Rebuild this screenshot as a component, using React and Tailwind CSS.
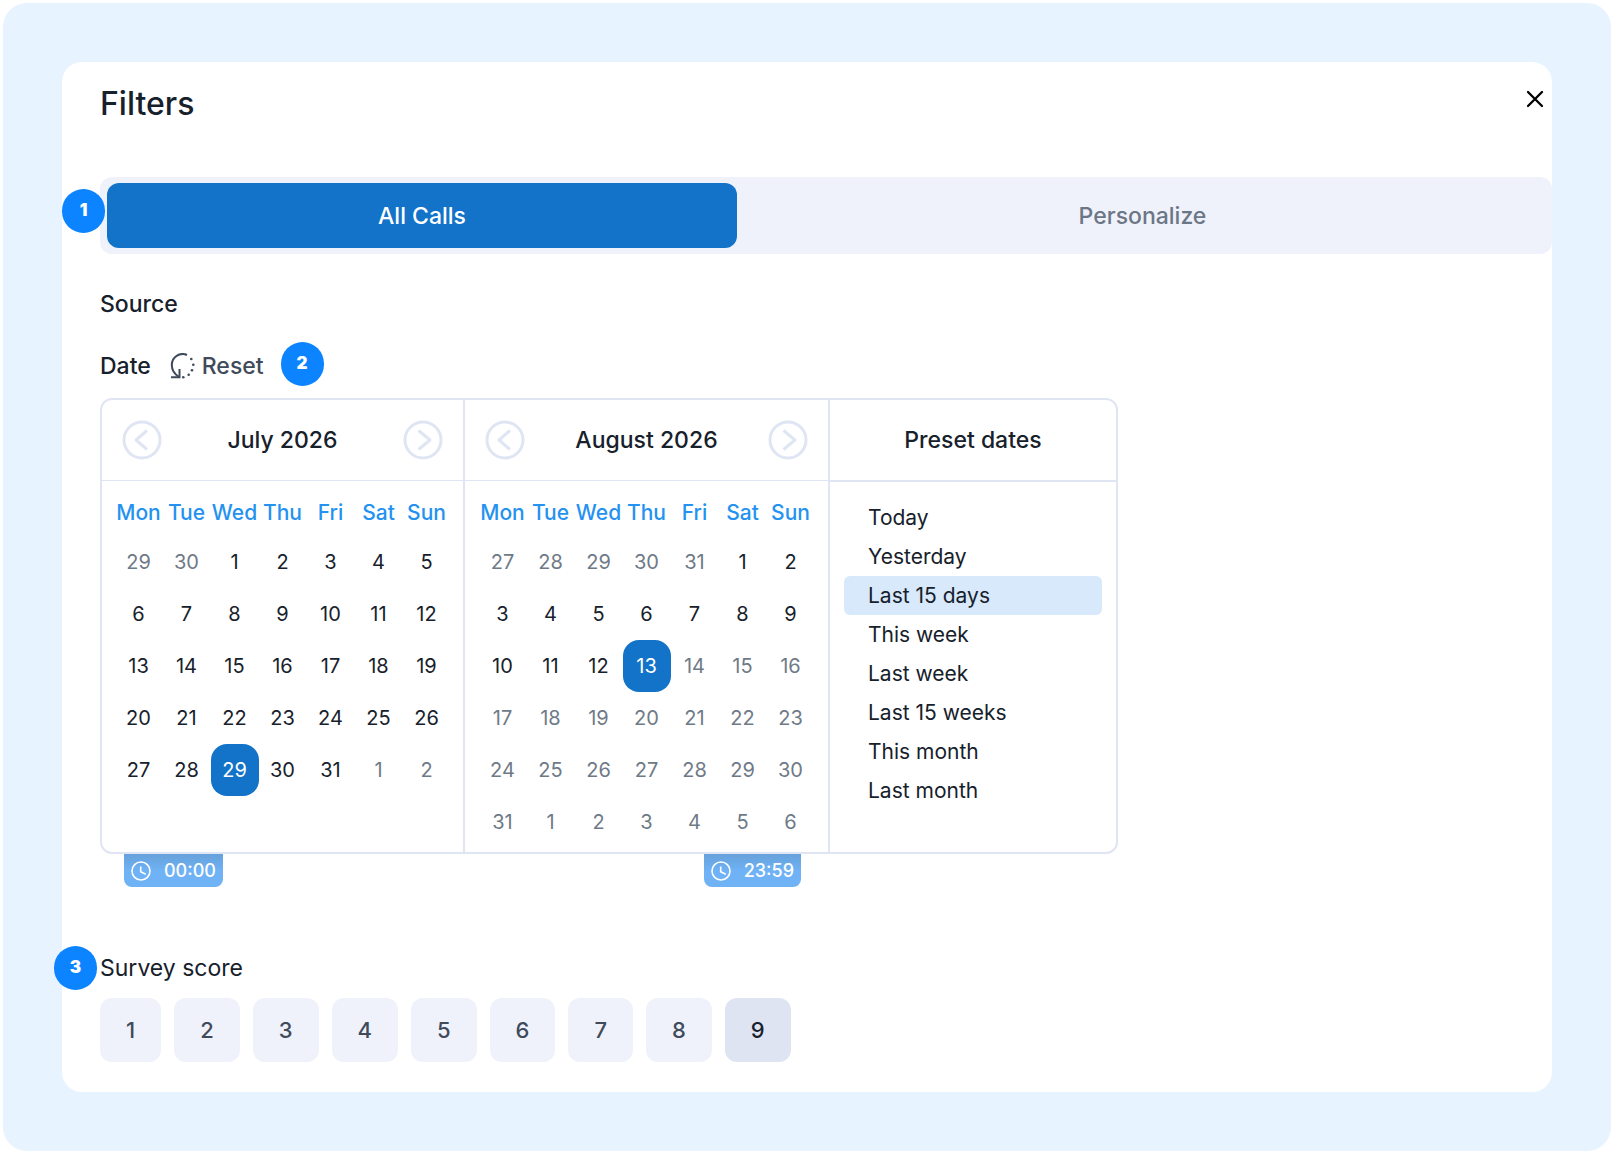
import React, { useState } from "react";

const WEEKDAYS = ["Mon", "Tue", "Wed", "Thu", "Fri", "Sat", "Sun"];

const PRESETS = [
  "Today",
  "Yesterday",
  "Last 15 days",
  "This week",
  "Last week",
  "Last 15 weeks",
  "This month",
  "Last month",
];

const SCORES = [1, 2, 3, 4, 5, 6, 7, 8, 9];

// before = trailing days of the previous month, after = days of the next one
const JULY = { title: "July 2026", before: [29, 30], days: 31, after: 2, selected: 29, lastActive: 31 };
const AUGUST = { title: "August 2026", before: [27, 28, 29, 30, 31], days: 31, after: 6, selected: 13, lastActive: 13 };

function buildWeeks(month) {
  const cells = month.before.map((day) => ({ day, muted: true }));
  for (let d = 1; d <= month.days; d++) {
    cells.push({ day: d, muted: d > month.lastActive, selected: d === month.selected });
  }
  for (let d = 1; d <= month.after; d++) {
    cells.push({ day: d, muted: true });
  }
  const weeks = [];
  for (let i = 0; i < cells.length; i += 7) {
    weeks.push(cells.slice(i, i + 7));
  }
  return weeks;
}

function Badge({ children, className = "" }) {
  return (
    <span className={`flex h-11 w-[43px] items-center justify-center rounded-full bg-[#0c84ff] pb-0.5 text-[17px] leading-5 font-black text-white ${className}`}>
      {children}
    </span>
  );
}

function ArrowButton({ label, d }) {
  return (
    <button type="button" aria-label={label} className="h-10 w-10 text-[#e0e5f4]">
      <svg viewBox="0 0 40 40" fill="none" stroke="currentColor" strokeWidth="3" strokeLinejoin="round">
        <circle cx="20" cy="20" r="18" />
        <path d={d} />
      </svg>
    </button>
  );
}

function ResetIcon() {
  return (
    <svg width="26" height="26" viewBox="0 0 26 26" fill="none" stroke="currentColor" strokeWidth="2">
      <path d="M17 2A10.800 10.800 0 0 0 1.800 12c0 5.400 2.900 9.200 7.200 12" />
      <path d="M1 24.300h8.500V16" />
      <g fill="currentColor" stroke="none">
        <circle cx="21.300" cy="6" r="1.300" />
        <circle cx="23.300" cy="11.700" r="1.300" />
        <circle cx="22" cy="17.300" r="1.300" />
        <circle cx="18.700" cy="21.700" r="1.300" />
        <circle cx="13.300" cy="24.200" r="1.300" />
      </g>
    </svg>
  );
}

function Month({ month }) {
  return (
    <div className="w-[363px] border-r-2 border-[#e0e5f4] last-of-type:border-r-0">
      <div className="flex h-[81px] items-center justify-between border-b border-[#e0e5f4] px-5">
        <ArrowButton label="Previous month" d="M25 10.500L14 20l11 9.500" />
        <h3 className="text-[23px] leading-8 font-medium">{month.title}</h3>
        <ArrowButton label="Next month" d="M15.500 10.500L27 20l-11.500 9.500" />
      </div>
      <table className="mx-auto mt-2 mb-1 w-[336px] table-fixed">
        <thead>
          <tr className="h-[47px]">
            {WEEKDAYS.map((d) => (
              <th key={d} className="p-0 text-center text-[21px] font-medium text-[#2492f0]">{d}</th>
            ))}
          </tr>
        </thead>
        <tbody>
          {buildWeeks(month).map((week, i) => (
            <tr key={i}>
              {week.map((c, j) => (
                <td key={j} className="p-0">
                  <button
                    type="button"
                    className={`block h-[52px] w-12 rounded-2xl text-center text-[20px] ${
                      c.selected ? "bg-[#1273c8] text-white" : c.muted ? "text-[#6f7a87]" : "text-[#17212b]"
                    }`}
                  >
                    {c.day}
                  </button>
                </td>
              ))}
            </tr>
          ))}
        </tbody>
      </table>
    </div>
  );
}

function TimeButton({ time }) {
  return (
    <button
      type="button"
      className="flex h-[33px] items-center gap-[13px] rounded-b-lg bg-linear-to-b from-[#66a1da] to-[#6fb2f5] to-50% px-[7px] text-[18px] font-medium text-white"
    >
      <svg width="20" height="20" viewBox="0 0 20 20" fill="none" stroke="currentColor" strokeWidth="1.600">
        <circle cx="10" cy="10" r="9" />
        <path d="M9.700 5.500v5.200l5 2.500" />
      </svg>
      {time}
    </button>
  );
}

export default function App() {
  const [tab, setTab] = useState("all");
  const [preset, setPreset] = useState("Last 15 days");
  const [score, setScore] = useState(9);

  return (
    <div className="min-h-screen bg-white px-[3px] pt-[3px] pb-1 font-['Inter',sans-serif] text-[#17212b]">
      <div className="rounded-3xl bg-[#e7f3ff] p-[59px]">
        <main className="rounded-[20px] bg-white pb-[30px] pl-[38px]">
          <header className="flex h-[115px] items-start justify-between pt-5 pr-[7px]">
            <h1 className="text-[32px] leading-[44px] font-medium">Filters</h1>
            <button type="button" aria-label="Close" className="mt-1 text-black">
              <svg width="20" height="26" viewBox="0 0 20 26" fill="none" stroke="currentColor" strokeWidth="2.300" strokeLinecap="round">
                <path d="M3 6l14 14M17 6L3 20" />
              </svg>
            </button>
          </header>

          <div className="relative">
            <div className="grid h-[77px] grid-cols-[630fr_811fr] rounded-xl bg-[#eff2fa] py-1.5 pr-1 pl-[7px] text-[23px] leading-8 font-medium">
              <button
                type="button"
                onClick={() => setTab("all")}
                className={`rounded-xl ${tab === "all" ? "bg-[#1273c8] text-white" : "text-[#6b7686]"}`}
              >
                All Calls
              </button>
              <button
                type="button"
                onClick={() => setTab("personalize")}
                className={`rounded-xl ${tab === "personalize" ? "bg-[#1273c8] text-white" : "text-[#6b7686]"}`}
              >
                Personalize
              </button>
            </div>
            <Badge className="absolute top-3 -left-[38px]">1</Badge>
          </div>

          <h2 className="mt-[34px] text-[23px] leading-8 font-medium">Source</h2>

          <div className="mt-[22px] flex items-start text-[23px] leading-8 font-medium">
            <h2 className="pt-2">Date</h2>
            <button type="button" className="ml-[19px] flex items-center gap-1.5 pt-2 text-[#3f4a5a]">
              <ResetIcon />
              Reset
            </button>
            <Badge className="ml-[17px]">2</Badge>
          </div>

          <div className="mt-3 flex w-fit rounded-xl border-2 border-[#e0e5f4]">
            <Month month={JULY} />
            <Month month={AUGUST} />
            <section className="w-[288px] border-l-2 border-[#e0e5f4]">
              <h3 className="flex h-[82px] items-center justify-center border-b-2 border-[#e0e5f4] text-[23px] leading-8 font-medium">Preset dates</h3>
              <ul className="px-3.5 pt-4">
                {PRESETS.map((p) => (
                  <li key={p}>
                    <button
                      type="button"
                      onClick={() => setPreset(p)}
                      className={`h-[39px] w-full rounded-md px-6 text-left text-[21px] ${p === preset ? "bg-[#d7e9fb]" : ""}`}
                    >
                      {p}
                    </button>
                  </li>
                ))}
              </ul>
            </section>
          </div>

          <div className="flex w-[728px] justify-between pr-[27px] pl-6">
            <TimeButton time="00:00" />
            <TimeButton time="23:59" />
          </div>

          <div className="relative mt-[59px]">
            <Badge className="absolute top-0 -left-[46px]">3</Badge>
            <h2 className="text-[23px] leading-[44px]">Survey score</h2>
          </div>
          <div className="mt-2 flex flex-wrap gap-[13px]">
            {SCORES.map((n) => (
              <button
                key={n}
                type="button"
                onClick={() => setScore(n)}
                className={`h-16 rounded-xl px-[26px] text-[22px] font-medium ${
                  n === score ? "bg-[#dfe4f2] text-[#17212b]" : "bg-[#eff2fa] text-[#3f4a5a]"
                }`}
              >
                {n}
              </button>
            ))}
          </div>
        </main>
      </div>
    </div>
  );
}
